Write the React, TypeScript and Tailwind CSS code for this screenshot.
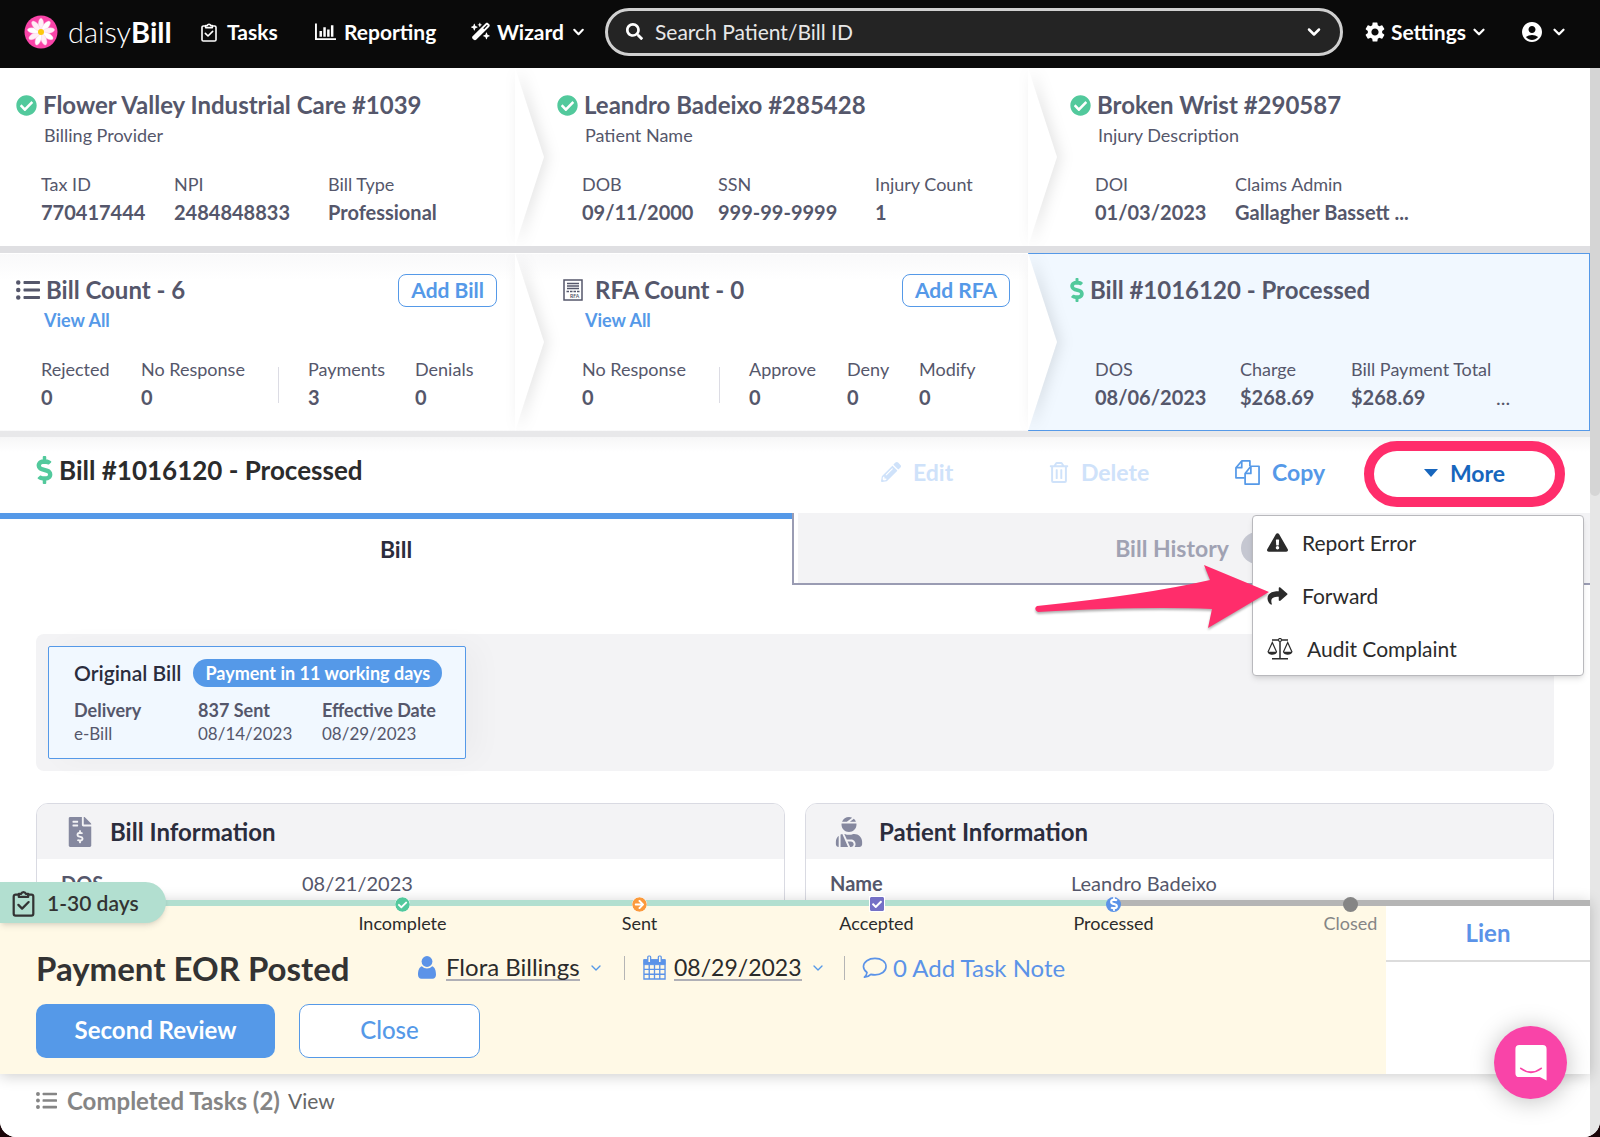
import { useState, type ReactNode } from 'react';
import {
  FaArrowCircleRight,
  FaCheckCircle,
  FaCheckSquare,
  FaDollarSign,
  FaExclamationTriangle,
  FaFileInvoiceDollar,
  FaListUl,
  FaPencilAlt,
  FaRegTrashAlt,
  FaSearch,
  FaShare,
  FaUser,
  FaUserInjured,
} from 'react-icons/fa';
import { FaWandMagicSparkles } from 'react-icons/fa6';
import { MdAccountCircle, MdSettings } from 'react-icons/md';
import { ChevronDown } from 'lucide-react';
import clsx from 'clsx';

interface Stat {
  label: string;
  value: string;
  width: string;
  divider?: boolean;
}

interface InfoCardProps {
  icon: ReactNode;
  title: string;
  label: string;
  value: string;
}

const providerStats: Stat[] = [
  { label: 'Tax ID', value: '770417444', width: 'w-[133px]' },
  { label: 'NPI', value: '2484848833', width: 'w-[154px]' },
  { label: 'Bill Type', value: 'Professional', width: 'w-[130px]' },
];

const patientStats: Stat[] = [
  { label: 'DOB', value: '09/11/2000', width: 'w-[136px]' },
  { label: 'SSN', value: '999-99-9999', width: 'w-[157px]' },
  { label: 'Injury Count', value: '1', width: 'w-[110px]' },
];

const injuryStats: Stat[] = [
  { label: 'DOI', value: '01/03/2023', width: 'w-[140px]' },
  { label: 'Claims Admin', value: 'Gallagher Bassett ...', width: 'w-[210px]' },
];

const billStats: Stat[] = [
  { label: 'Rejected', value: '0', width: 'w-[100px]' },
  { label: 'No Response', value: '0', width: 'w-[137px]' },
  { label: 'Payments', value: '3', width: 'w-[137px]', divider: true },
  { label: 'Denials', value: '0', width: 'w-[70px]' },
];

const rfaStats: Stat[] = [
  { label: 'No Response', value: '0', width: 'w-[137px]' },
  { label: 'Approve', value: '0', width: 'w-[128px]', divider: true },
  { label: 'Deny', value: '0', width: 'w-[72px]' },
  { label: 'Modify', value: '0', width: 'w-[70px]' },
];

const processedStats: Stat[] = [
  { label: 'DOS', value: '08/06/2023', width: 'w-[145px]' },
  { label: 'Charge', value: '$268.69', width: 'w-[111px]' },
  { label: 'Bill Payment Total', value: '$268.69', width: 'w-[145px]' },
];

function DaisyLogo() {
  return (
    <svg viewBox="0 0 34 34" className="h-[34px] w-[34px]" aria-hidden="true">
      <circle cx="17" cy="17" r="16.5" fill="#f944a8" />
      {Array.from({ length: 9 }, (_, i) => (
        <ellipse
          key={i}
          cx="17"
          cy="9.200"
          rx="2.700"
          ry="6"
          fill={i % 2 ? '#ffffff' : '#ffeef6'}
          stroke="#fbc3e0"
          strokeWidth="0.400"
          transform={`rotate(${i * 40} 17 17)`}
        />
      ))}
      <circle cx="17" cy="17" r="3" fill="#fcc90c" />
    </svg>
  );
}

function ClipboardIcon({ className }: { className?: string }) {
  return (
    <svg viewBox="0 0 24 30" fill="none" stroke="currentColor" strokeWidth="2.4" strokeLinejoin="round" className={className} aria-hidden="true">
      <path d="M7 6H3.5A2 2 0 0 0 1.5 8v18.500a2 2 0 0 0 2 2h17a2 2 0 0 0 2-2V8a2 2 0 0 0-2-2H17" />
      <path d="M7 8.500V5.200h2.500a2.600 2.600 0 0 1 5 0H17v3.300z" />
      <path d="M6.500 17l4 4 7-7" strokeLinecap="round" />
    </svg>
  );
}

function BarsIcon() {
  return (
    <svg viewBox="0 0 22 18" fill="none" stroke="currentColor" className="h-[18px] w-[21px]" aria-hidden="true">
      <path d="M1 0v16.500h21" strokeWidth="2" />
      <path d="M6 14V8M10 14V4M14 14V6.500M18 14V2" strokeWidth="2.600" />
    </svg>
  );
}

function RfaIcon() {
  return (
    <svg viewBox="0 0 20 22" fill="none" stroke="#55576b" className="h-[22px] w-5" aria-hidden="true">
      <rect x="1" y="1" width="18" height="20" strokeWidth="1.500" />
      <path d="M4 4.500h12M4 7h12M4 9.500h12" strokeWidth="1.300" />
      <path d="M3.500 12.500h13" strokeWidth="1.300" strokeDasharray="2.500 1" />
      <text x="7" y="18.800" fontSize="5" fontWeight="700" fontFamily="Lato, sans-serif" fill="#55576b" stroke="none">RFA</text>
    </svg>
  );
}

function CopyIcon() {
  return (
    <svg viewBox="0 0 26 26" fill="none" stroke="currentColor" strokeWidth="1.800" strokeLinejoin="round" className="h-[25px] w-[25px]" aria-hidden="true">
      <path d="M10 18.500H1V8l6-7h8.500v5.500" />
      <path d="M7 1v7H1" />
      <path d="M10.500 14l6-7.500H25V25H10.500z" />
      <path d="M16.500 6.500V14h-6" />
    </svg>
  );
}

function ScalesIcon() {
  return (
    <svg viewBox="0 0 26 22" fill="none" stroke="currentColor" strokeWidth="1.200" className="h-[22px] w-[26px]" aria-hidden="true">
      <path d="M5 2h6.500M14.500 2H21M13 3.500V20.500M5 20.800h16" strokeWidth="1.500" />
      <circle cx="13" cy="2" r="1.500" />
      <path d="M1 14L5.300 4.500 9.600 14M16.400 14l4.300-9.500L25 14" />
      <path d="M.5 13.800h9.600c-.5 4-9 4-9.600 0zM15.900 13.800h9.600c-.5 4-9 4-9.600 0z" fill="currentColor" stroke="none" />
    </svg>
  );
}

function CalendarIcon() {
  return (
    <svg viewBox="0 0 24 26" className="h-[25px] w-[23px]" fill="none" stroke="currentColor" aria-hidden="true">
      <path d="M1 5h22v5H1z" fill="currentColor" />
      <path d="M1 5h22v20H1zM6.500 10v15M12 10v15M17.500 10v15M1 15h22M1 20h22" strokeWidth="1.400" />
      <rect x="5" y="1" width="3" height="7" rx="1" fill="#fff9e6" strokeWidth="1.300" />
      <rect x="16" y="1" width="3" height="7" rx="1" fill="#fff9e6" strokeWidth="1.300" />
    </svg>
  );
}

function BubbleIcon() {
  return (
    <svg viewBox="0 0 26 22" className="h-[22px] w-[25px]" fill="none" stroke="currentColor" strokeWidth="1.700" strokeLinejoin="round" aria-hidden="true">
      <path d="M13.500 1C7 1 1.500 4.600 1.500 9.500c0 2.600 1.500 4.600 3.700 6.200-.3 1.800-1.200 3.500-2.700 4.800 2.800-.2 5-1.100 6.700-2.900 1.300.3 2.800.5 4.300.5C20 18.100 25 14.500 25 9.500S20 1 13.500 1z" />
    </svg>
  );
}

function PersonIcon() {
  return (
    <svg viewBox="0 0 18 23" className="h-[23px] w-[18px]" fill="currentColor" aria-hidden="true">
      <circle cx="9" cy="5.500" r="5.400" />
      <path d="M3.800 10.200a7 7 0 0 0 10.400 0C17 11 18 15 18 18.500c0 2.500-1.200 4.200-3.500 4.200h-11C1.200 22.700 0 21 0 18.500 0 15 1 11 3.800 10.200z" />
    </svg>
  );
}

function Chevron({ className = 'h-[18px] w-[18px]', weight = 3 }: { className?: string; weight?: number }) {
  return <ChevronDown className={className} strokeWidth={weight} aria-hidden="true" />;
}

function NavBar() {
  return (
    <nav className="flex h-[68px] shrink-0 items-center bg-[#0a0a0a] pb-[5px] pl-6 pr-8 text-[21px] font-bold text-white">
      <a href="#home" className="flex items-center gap-2.5">
        <DaisyLogo />
        <span className="w-[105px] text-[29px] font-light leading-8">
          daisy<span className="font-bold">Bill</span>
        </span>
      </a>
      <a href="#tasks" className="ml-7 flex w-[86px] items-center gap-2.5">
        <ClipboardIcon className="h-5 w-4 shrink-0" /> Tasks
      </a>
      <a href="#reporting" className="ml-7 flex w-[128px] items-center gap-2">
        <BarsIcon /> Reporting
      </a>
      <button className="ml-7 flex w-[116px] items-center gap-1.5">
        <FaWandMagicSparkles className="h-[21px] w-[21px]" /> Wizard <Chevron />
      </button>
      <label className="ml-[18px] flex h-12 min-w-0 flex-1 items-center rounded-full border-[3px] border-[#d0d0d0] bg-[#242424] pl-[18px] pr-4">
        <FaSearch className="h-[17px] w-[17px]" />
        <input
          aria-label="Search"
          placeholder="Search Patient/Bill ID"
          className="ml-3 min-w-0 flex-1 bg-transparent text-[21px] font-normal outline-none placeholder:text-[#e8e8e8]"
        />
        <Chevron className="h-5 w-5" />
      </label>
      <button className="ml-5 flex w-[129px] items-center gap-1">
        <MdSettings className="h-6 w-6 shrink-0" /> Settings <Chevron className="h-[18px] w-[18px] shrink-0" />
      </button>
      <button className="ml-7 flex items-center gap-1.5" aria-label="Account">
        <MdAccountCircle className="h-6 w-6" /> <Chevron />
      </button>
    </nav>
  );
}

function StatList({ stats, more }: { stats: Stat[]; more?: boolean }) {
  return (
    <dl className="flex pl-[41px] text-[#55576b]">
      {stats.map((stat) => (
        <div key={stat.label} className={clsx('flex shrink-0', stat.width)}>
          {stat.divider && <span className="mr-[29px] mt-3 h-9 w-px bg-[#dcdce4]" />}
          <div className="whitespace-nowrap">
            <dt className="text-lg leading-7">{stat.label}</dt>
            <dd className="text-xl font-bold leading-7">{stat.value}</dd>
          </div>
        </div>
      ))}
      {more && <span className="mt-7 text-xl leading-7">...</span>}
    </dl>
  );
}

function CrumbCard({
  icon,
  title,
  sub,
  stats,
  action,
  link,
  last,
  active,
  indent,
}: {
  icon: ReactNode;
  title: string;
  sub?: string;
  stats: Stat[];
  action?: string;
  link?: boolean;
  last?: boolean;
  active?: boolean;
  indent?: boolean;
}) {
  return (
    <section
      className={clsx(
        'relative h-[178px] border-y pt-5',
        active ? 'border-r border-[#5599e8] bg-[#f1f8ff]' : 'border-transparent bg-white',
        link && 'bg-linear-to-b from-[#f9f9fa] to-white to-15%',
        indent && 'pl-[26px]',
      )}
    >
      <div className="flex h-8 items-center pl-4 pr-[18px]">
        <h2 className="flex items-center gap-1.5 whitespace-nowrap text-2xl font-bold text-[#55576b]">
          {icon}
          {title}
        </h2>
        {action && (
          <button className="ml-auto h-[33px] rounded-lg border border-[#5599e8] px-3 text-[21px] font-bold leading-7 text-[#5599e8]">
            {action}
          </button>
        )}
      </div>
      <p className="h-7 pl-11 text-lg leading-7 text-[#55576b]">
        {link ? (
          <a href="#all" className="font-bold text-[#5599e8]">
            {sub}
          </a>
        ) : (
          sub
        )}
      </p>
      <div className="mt-[21px]">
        <StatList stats={stats} more={active} />
      </div>
      {!last && (
        <svg
          viewBox="0 0 29 178"
          preserveAspectRatio="none"
          className="absolute -top-px left-full z-10 h-[178px] w-[29px] drop-shadow-[4px_0_7px_rgba(0,0,0,0.1)]"
          aria-hidden="true"
        >
          <path d="M-1 0H0L29 89 0 178H-1z" fill="#ffffff" />
        </svg>
      )}
    </section>
  );
}

function Crumbs() {
  const check = <FaCheckCircle className="h-[21px] w-[21px] text-[#52c99c]" />;
  return (
    <div className="bg-[#dfdfe2]">
      <div className="grid grid-cols-[515fr_513fr_562fr] overflow-hidden">
        <CrumbCard icon={check} title="Flower Valley Industrial Care #1039" sub="Billing Provider" stats={providerStats} />
        <CrumbCard icon={check} title="Leandro Badeixo #285428" sub="Patient Name" stats={patientStats} indent />
        <CrumbCard icon={check} title="Broken Wrist #290587" sub="Injury Description" stats={injuryStats} indent last />
      </div>
      <div className="mt-[7px] grid grid-cols-[515fr_513fr_562fr] overflow-hidden">
        <CrumbCard icon={<FaListUl className="h-6 w-6" />} title="Bill Count - 6" sub="View All" stats={billStats} action="Add Bill" link />
        <CrumbCard
          icon={<span className="mx-1.5"><RfaIcon /></span>}
          title="RFA Count - 0"
          sub="View All"
          stats={rfaStats}
          action="Add RFA"
          link
          indent
        />
        <CrumbCard
          icon={<FaDollarSign className="h-6 w-[14px] text-[#52c99c]" />}
          title="Bill #1016120 - Processed"
          stats={processedStats}
          active
          indent
          last
        />
      </div>
      <div className="h-1.5 bg-[#e8e8ea]" />
    </div>
  );
}

function MoreMenu() {
  const items = [
    { label: 'Report Error', icon: <FaExclamationTriangle className="h-[21px] w-[21px]" /> },
    { label: 'Forward', icon: <FaShare className="h-5 w-[21px]" /> },
    { label: 'Audit Complaint', icon: <ScalesIcon /> },
  ];
  return (
    <ul className="absolute right-[6px] top-[78px] z-30 w-[332px] rounded-sm border border-[#b9b9bd] bg-white text-[21px] text-[#2b2b2b] shadow-md">
      {items.map((item) => (
        <li key={item.label}>
          <button className="flex h-[53px] w-full items-center gap-3.5 pl-3.5 text-left">
            {item.icon}
            {item.label}
          </button>
        </li>
      ))}
    </ul>
  );
}

// hand-drawn pointer that ends at the Forward item
function Pointer() {
  return (
    <svg viewBox="0 0 236 66" className="absolute right-[320px] top-[127px] z-40 h-[66px] w-[236px] drop-shadow-[0_2px_1px_rgba(0,0,0,0.3)]" aria-hidden="true">
      <path d="M3 42Q110 31 176 16L170 1 235 28 174 64 178 45Q110 42 4 48Q-1 45 3 42z" fill="#ff2d6b" />
    </svg>
  );
}

function BillToolbar({ open, onToggle }: { open: boolean; onToggle: () => void }) {
  return (
    <div className="relative bg-linear-to-b from-[#f6f6f7] to-white to-20%">
      <div className="flex h-[76px] items-center pb-1.5 pl-9 pr-[25px] text-[23px] font-bold">
        <h1 className="flex items-center gap-1.5 pb-1 text-[26px] text-[#2b2b2b]">
          <FaDollarSign className="h-7 w-[17px] text-[#52c99c]" />
          Bill #1016120 - Processed
        </h1>
        <button disabled className="ml-auto mr-[92px] flex w-[76px] items-center gap-3 text-[#cfe2fa]">
          <FaPencilAlt className="h-5 w-5" /> Edit
        </button>
        <button disabled className="mr-[82px] flex w-[104px] items-center gap-3 text-[#cfe2fa]">
          <FaRegTrashAlt className="h-[21px] w-5" /> Delete
        </button>
        <button className="mr-[33px] flex w-[96px] items-center gap-3 text-[#5599e8]">
          <CopyIcon /> Copy
        </button>
        <button
          onClick={onToggle}
          className="mt-1 flex h-[66px] w-[201px] shrink-0 items-center justify-center gap-3 rounded-full border-[10px] border-[#ff2d6b] bg-white pb-0.5 text-[#1766bd]"
        >
          <svg viewBox="0 0 14 8" className="h-2 w-3.5" fill="currentColor" aria-hidden="true">
            <path d="M0 0h14L7 8z" />
          </svg>
          More
        </button>
      </div>
      {open && <MoreMenu />}
      {open && <Pointer />}
    </div>
  );
}

function Tabs() {
  return (
    <div className="flex h-[72px] text-[23px] font-bold">
      <button className="w-[calc(50%-3px)] border-t-[6px] border-[#5599e8] pb-1.5 text-[#2b2d3d]">Bill</button>
      <div className="flex flex-1 border-b-2 border-l-2 border-[#9a9cb3] pl-1">
        <button className="flex w-full items-center justify-center gap-3 bg-[#f3f3f5] text-[#a0a2b3]">
          Bill History
          <span className="h-8 w-8 rounded-full bg-[#c5c7d1]" />
        </button>
      </div>
    </div>
  );
}

function OriginalBill() {
  const facts = [
    ['Delivery', 'e-Bill'],
    ['837 Sent', '08/14/2023'],
    ['Effective Date', '08/29/2023'],
  ];
  return (
    <div className="mt-[49px] rounded-lg bg-[#f3f3f5] p-3">
      <div className="h-[113px] w-[418px] rounded-xs border border-[#5599e8] bg-[#f1f8ff] pl-[25px] pt-3 shadow-[12px_0_30px_rgba(0,0,0,0.03)]">
        <div className="flex items-center gap-3 whitespace-nowrap">
          <h3 className="text-[21px] font-semibold leading-7 text-[#2b2d3d]">Original Bill</h3>
          <span className="rounded-full bg-[#5599e8] px-3 text-lg font-bold leading-7 text-white">Payment in 11 working days</span>
        </div>
        <dl className="mt-3 flex leading-[23px] text-[#55576b]">
          {facts.map(([label, value]) => (
            <div key={label} className="w-[124px] whitespace-nowrap">
              <dt className="text-lg font-bold leading-[23px]">{label}</dt>
              <dd className="text-[17px] leading-[23px]">{value}</dd>
            </div>
          ))}
        </dl>
      </div>
    </div>
  );
}

function InfoCard({ icon, title, label, value }: InfoCardProps) {
  return (
    <section className="h-60 overflow-hidden rounded-xl border border-[#d9dae2] bg-white">
      <h3 className="flex h-[55px] items-center bg-[#f3f3f5] pl-7 text-2xl font-bold text-[#2b2d3d]">
        <span className="w-[45px] text-[30px] text-[#85889f]">{icon}</span>
        {title}
      </h3>
      <dl className="flex pl-6 pt-2.5 text-xl leading-7 text-[#55576b]">
        <dt className="w-[241px] font-bold">{label}</dt>
        <dd>{value}</dd>
      </dl>
    </section>
  );
}

function Timeline() {
  const dot = 'h-[15px] w-[15px]';
  const steps = [
    { label: 'Incomplete', icon: <FaCheckCircle className={clsx(dot, 'rounded-full bg-white text-[#52c99c]')} /> },
    { label: 'Sent', icon: <FaArrowCircleRight className={clsx(dot, 'rounded-full bg-white text-[#fb9a3c]')} /> },
    { label: 'Accepted', icon: <FaCheckSquare className="h-4 w-4 bg-white text-[#7470c6]" /> },
    {
      label: 'Processed',
      icon: (
        <span className="flex h-[15px] w-[15px] items-center justify-center rounded-full bg-[#5b93e8]">
          <FaDollarSign className="h-3.5 w-3 text-white" />
        </span>
      ),
    },
    { label: 'Closed', icon: <span className="h-[15px] w-[15px] rounded-full bg-[#858585]" />, muted: true },
  ];
  return (
    <ol className="absolute inset-x-0 -top-1 grid grid-cols-[284fr_repeat(5,237fr)_121fr] text-lg leading-[22px] text-[#2b2b2b]">
      <li aria-hidden="true" />
      {steps.map((step) => (
        <li key={step.label} className={clsx('flex flex-col items-center', step.muted && 'text-[#858585]')}>
          <span className="flex h-4 items-center">{step.icon}</span>
          {step.label}
        </li>
      ))}
    </ol>
  );
}

function TaskBar() {
  return (
    <div className="relative z-20 shrink-0 shadow-[0_2px_14px_rgba(0,0,0,0.2)]">
      <div className="flex h-1.5">
        <div className="w-[70%] bg-[#b2dfd0]" />
        <div className="flex-1 bg-[#b5b5b5]" />
      </div>
      <Timeline />
      <div className="absolute -top-[18px] left-0 flex h-[41px] w-[166px] items-center gap-3 rounded-r-full bg-[#b2dfd0] pl-3 text-[21px] font-semibold text-[#333333] shadow-md">
        <ClipboardIcon className="h-7 w-[23px]" />
        1-30 days
      </div>
      <div className="flex bg-[#fff9e6]">
        <div className="flex-1 pb-4 pl-9 pt-10">
          <div className="flex h-11 items-center pb-px text-2xl text-[#2b2b2b]">
            <h2 className="w-[382px] text-[33px] font-bold text-[#333333]">Payment EOR Posted</h2>
            <button className="flex w-[188px] items-center whitespace-nowrap">
              <span className="mr-2.5 text-[#5b93e8]">
                <PersonIcon />
              </span>
              <span className="mr-2 border-b-2 border-[#b0b0b6] leading-6">Flora Billings</span>
              <Chevron className="h-4 w-4 text-[#5599e8]" weight={2} />
            </button>
            <span className="mx-[18px] h-6 w-px bg-[#b5b5b5]" />
            <button className="flex w-[184px] items-center whitespace-nowrap text-[#2b2b2b]">
              <span className="mr-2 text-[#5b93e8]">
                <CalendarIcon />
              </span>
              <span className="mr-2 border-b-2 border-[#b0b0b6] text-[23px] leading-6">08/29/2023</span>
              <Chevron className="h-4 w-4 text-[#5599e8]" weight={2} />
            </button>
            <span className="mx-[17px] h-6 w-px bg-[#b5b5b5]" />
            <button className="flex items-center gap-1.5 whitespace-nowrap text-[#5b93e8]">
              <BubbleIcon /> 0 Add Task Note
            </button>
          </div>
          <div className="mt-3.5 flex gap-6 text-2xl">
            <button className="h-[54px] w-[239px] rounded-[10px] bg-[#5599e8] pb-0.5 font-bold text-white">Second Review</button>
            <button className="h-[54px] w-[181px] rounded-[10px] border border-[#5599e8] bg-white pb-0.5 font-medium text-[#5599e8]">Close</button>
          </div>
        </div>
        <aside className="w-[204px] bg-white">
          <a href="#lien" className="flex h-14 items-center justify-center border-b-2 border-[#dcdcdc] text-2xl font-bold text-[#5b93e8]">
            Lien
          </a>
        </aside>
      </div>
    </div>
  );
}

function ChatButton() {
  return (
    <button
      aria-label="Chat"
      className="fixed bottom-[38px] right-[33px] z-50 flex h-[73px] w-[73px] items-center justify-center rounded-full bg-[#f944a8] shadow-[0_2px_24px_rgba(0,0,0,0.25)]"
    >
      <svg viewBox="0 0 32 37" className="h-9 w-8" aria-hidden="true">
        <path d="M4 0h24a4 4 0 0 1 4 4v32.500L25 33H4a4 4 0 0 1-4-4V4a4 4 0 0 1 4-4z" fill="#ffffff" />
        <path d="M5.500 24Q16 32 26.500 24" fill="none" stroke="#f944a8" strokeWidth="1.800" strokeLinecap="round" />
      </svg>
    </button>
  );
}

export default function App() {
  const [menuOpen, setMenuOpen] = useState(true);

  return (
    <div className="bg-[#1a0508] font-[Lato,'Open_Sans',sans-serif]">
      <div className="flex h-screen flex-col overflow-hidden rounded-b-2xl bg-white">
        <NavBar />
        <div className="flex min-h-0 flex-1">
          <div className="flex min-w-0 flex-1 flex-col">
            <main className="min-h-0 flex-1 overflow-hidden">
              <Crumbs />
              <BillToolbar open={menuOpen} onToggle={() => setMenuOpen(!menuOpen)} />
              <Tabs />
              <div className="px-9">
                <OriginalBill />
                <div className="mt-8 grid grid-cols-2 gap-5">
                  <InfoCard icon={<FaFileInvoiceDollar />} title="Bill Information" label="DOS" value="08/21/2023" />
                  <InfoCard icon={<FaUserInjured />} title="Patient Information" label="Name" value="Leandro Badeixo" />
                </div>
              </div>
            </main>
            <TaskBar />
            <footer className="flex h-[63px] shrink-0 items-center bg-white pb-2.5 pl-9 text-2xl text-[#858585]">
              <FaListUl className="mr-2.5 h-[21px] w-[21px]" />
              <strong className="mr-2">Completed Tasks (2)</strong>
              <a href="#completed" className="text-[21px] text-[#666666]">
                View
              </a>
            </footer>
          </div>
          <div className="w-2.5 bg-[#e6e6e6]">
            <div className="h-[40%] rounded-b-full bg-[#d5d5d5]" />
          </div>
        </div>
      </div>
      <ChatButton />
    </div>
  );
}
